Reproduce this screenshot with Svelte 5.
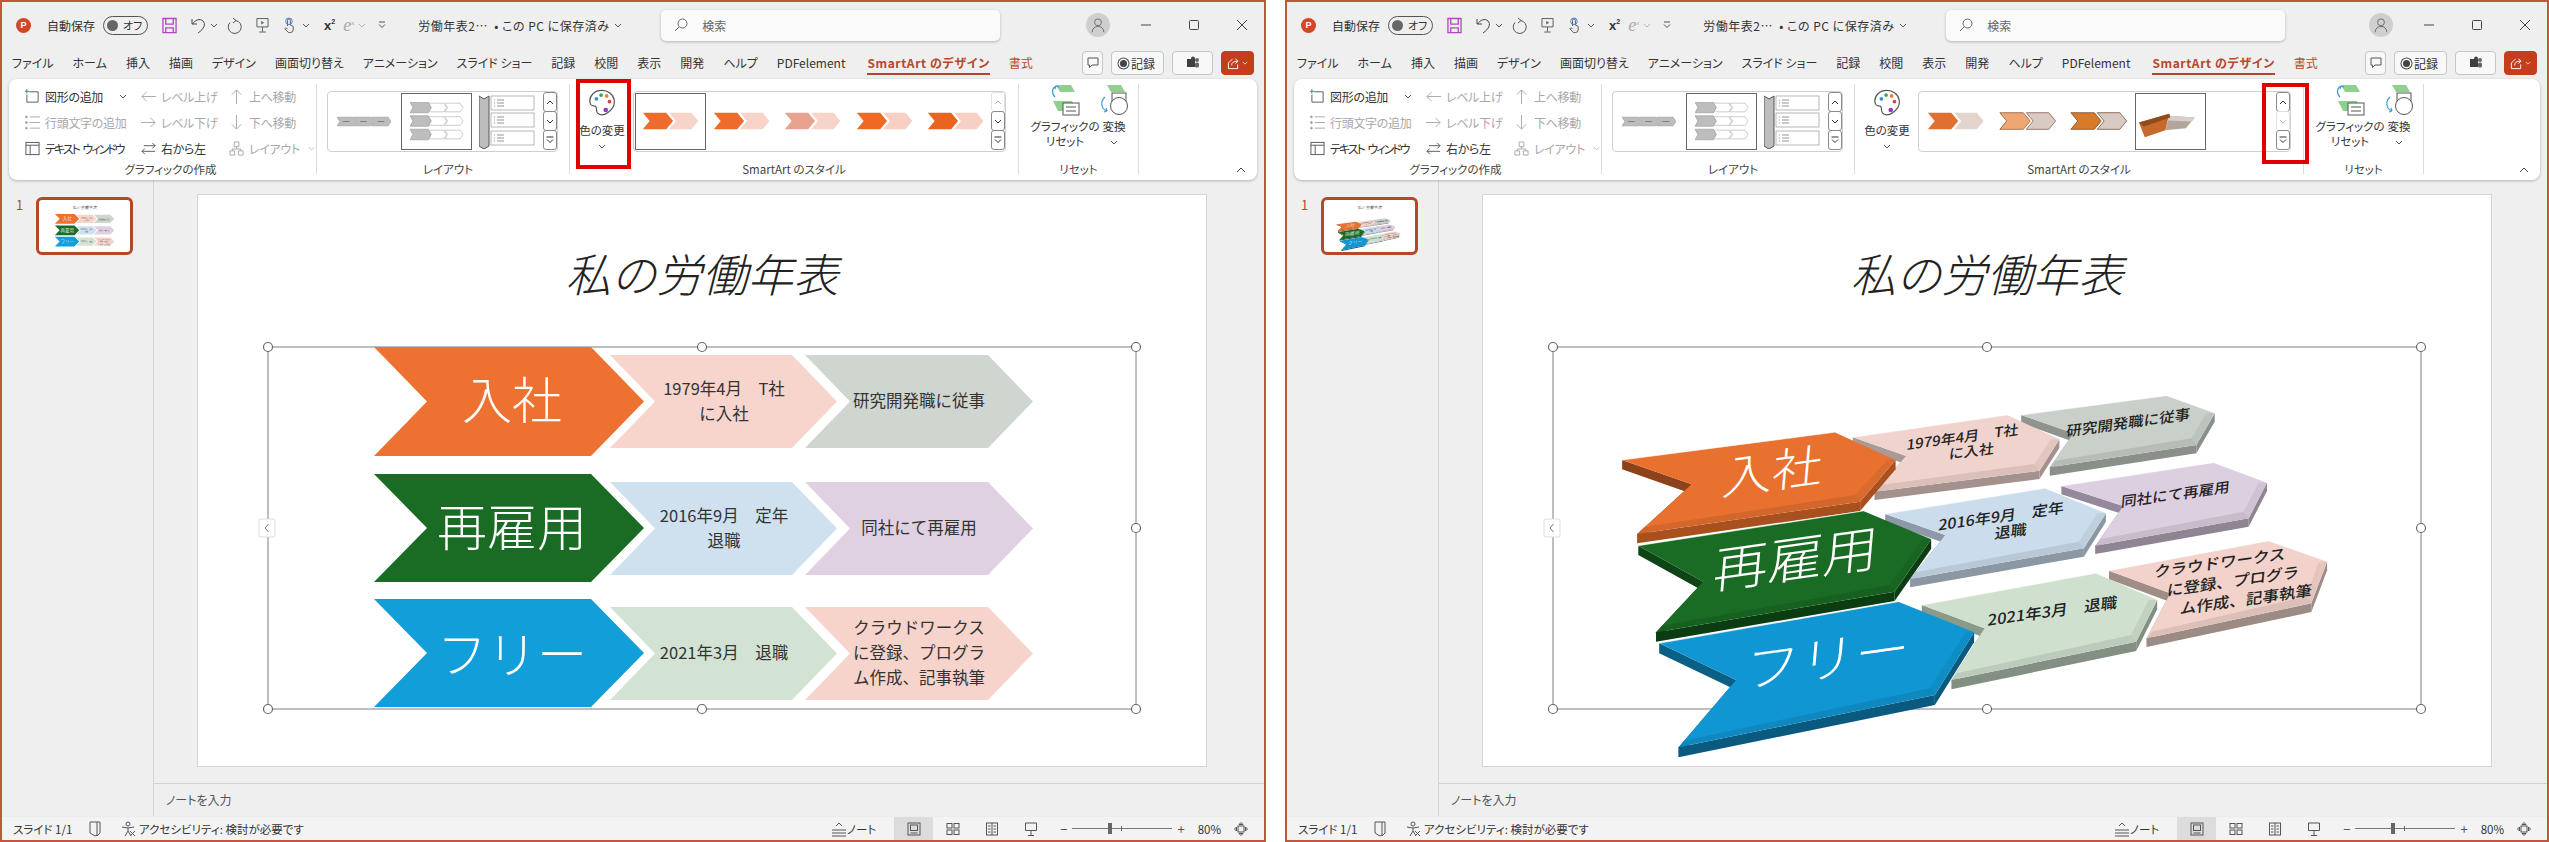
<script>
	const tabs = ['ファイル', 'ホーム', '挿入', '描画', 'デザイン', '画面切り替え', 'アニメーション', 'スライド ショー', '記録', '校閲', '表示', '開発', 'ヘルプ', 'PDFelement']

	const arrow = (x, y, w, h, d) =>
		`${x},${y} ${x + w - d},${y} ${x + w},${y + h / 2} ${x + w - d},${y + h} ${x},${y + h} ${x + d},${y + h / 2}`

	const flatRows = [
		{ y: 347, c: '#ed7231', label: '入社', a: '#f7d5cc', b: '#cfd6cf', at: ['1979年4月　T社', 'に入社'], bt: ['研究開発職に従事'] },
		{ y: 474, c: '#1a6b24', label: '再雇用', a: '#cfe0ef', b: '#e0d1e2', at: ['2016年9月　定年', '退職'], bt: ['同社にて再雇用'] },
		{ y: 599, c: '#119ed9', label: 'フリー', a: '#d3e3d3', b: '#f7d4cb', at: ['2021年3月　退職'], bt: ['クラウドワークス', 'に登録、プログラ', 'ム作成、記事執筆'] }
	]

	// points read off the reference: left tip, shoulder, right tip, lower right, lower left, notch
	const solids = [
		{ top: [[920,105],[1197,47],[1290,100],[1255,195],[975,262],[1020,160]], d: 25, c: '#c9d0c9', s: '#8f948f', f: '#8b8f8a' },
		{ top: [[598,172],[893,105],[993,178],[955,272],[640,335],[700,228]], d: 25, c: '#f0d3cc', s: '#a99a97', f: '#a3918d' },
		{ top: [[157,240],[563,157],[680,240],[612,365],[186,462],[290,313]], d: 28, c: '#e87130', s: '#8c431c', f: '#a9501f' },
		{ top: [[997,318],[1287,248],[1390,308],[1355,415],[1062,497],[1115,378]], d: 25, c: '#dccfe0', s: '#94899a', f: '#8f8492' },
		{ top: [[660,402],[965,325],[1082,400],[1040,505],[708,597],[775,465]], d: 25, c: '#cbdcec', s: '#8d99a8', f: '#8b97a3' },
		{ top: [[188,497],[618,393],[748,478],[678,635],[222,757],[312,605]], d: 28, c: '#1a6b24', s: '#0f4416', f: '#0c3d12' },
		{ top: [[1088,572],[1392,483],[1505,545],[1475,670],[1160,775],[1205,640]], d: 26, c: '#f2d2ca', s: '#a08d88', f: '#9c8a85' },
		{ top: [[730,675],[1062,580],[1180,660],[1140,785],[787,900],[850,745]], d: 28, c: '#cfe0ce', s: '#8c9a8a', f: '#848f83' },
		{ top: [[228,790],[685,665],[830,757],[755,945],[265,1102],[375,900]], d: 30, c: '#1096d2', s: '#0a5f85', f: '#0a5a80' }
	]
	const solidTexts = [
		{ t: '入社', x: 445, y: 265, s: 50, big: true },
		{ t: '再雇用', x: 490, y: 525, s: 55, big: true },
		{ t: 'フリー', x: 550, y: 825, s: 55, big: true },
		{ t: '1979年4月　T社', x: 808, y: 168, s: 15 },
		{ t: 'に入社', x: 825, y: 210, s: 15 },
		{ t: '研究開発職に従事', x: 1125, y: 125, s: 15.5 },
		{ t: '2016年9月　定年', x: 882, y: 405, s: 16 },
		{ t: '退職', x: 900, y: 450, s: 16 },
		{ t: '同社にて再雇用', x: 1215, y: 340, s: 15.5 },
		{ t: '2021年3月　退職', x: 980, y: 690, s: 16.5 },
		{ t: 'クラウドワークス', x: 1300, y: 545, s: 16.5 },
		{ t: 'に登録、プログラ', x: 1325, y: 600, s: 16.5 },
		{ t: 'ム作成、記事執筆', x: 1350, y: 655, s: 16.5 }
	]
	const rx = (x) => x / 1.912 + 255
	const ry = (y) => y / 3 + 380
	const pts = (list) => list.map(([x, y]) => `${rx(x).toFixed(1)},${ry(y).toFixed(1)}`).join(' ')
	const strip = (a, b, d) => pts([a, b, [b[0], b[1] + d], [a[0], a[1] + d]])
	const bevel = (a, b) => pts([a, b, [b[0] - 10, b[1] - 20], [a[0] + 10, a[1] - 20]])
	const edge = (a, b) => pts([a, b, [b[0] - 10, b[1] - 20], [a[0] - 16, a[1]]])

	const windows = [
		{
			cls: 'left', stylesSel: 0, upOff: true, downOff: false,
			styles: [
				{ a: '#ed6b2b', b: '#f8d3ca' }, { a: '#ed6b2b', b: '#f8d3ca' }, { a: '#e8a38f', b: '#f8d3ca' },
				{ a: '#ee6a24', b: '#f7cfc5' }, { a: '#e9641f', b: '#f7cfc5' }
			]
		},
		{
			cls: 'right', stylesSel: 3, upOff: false, downOff: true,
			styles: [
				{ a: '#e0702f', b: '#e3d5ce' }, { a: '#f0a672', b: '#d9cbc4', line: '#7c4a2e' },
				{ a: '#d87a2c', b: '#d9cbc4', line: '#5e3a1e' }, { solid: true }
			]
		}
	]
</script>

{#snippet chev(cls = '')}
	<svg class="chev {cls}" viewBox="0 0 8 5"><polyline points="1,1 4,4 7,1" /></svg>
{/snippet}

{#snippet flatDiagram()}
	{#each flatRows as row, i}
		<polygon points={arrow(374, row.y, 270, 109 - (i ? 1 : 0), 53)} fill={row.c} />
		<polygon points={arrow(610, row.y + 8, 227, 93, 45)} fill={row.a} />
		<polygon points={arrow(805, row.y + 8, 228, 93, 45)} fill={row.b} />
		<text class="big" x="512" y={row.y + 50 + (i === 2 ? 2 : 0)}>{row.label}</text>
		{#each row.at as line, n}
			<text class="small" x="724" y={row.y + 53 + (n - (row.at.length - 1) / 2) * 25}>{line}</text>
		{/each}
		{#each row.bt as line, n}
			<text class="small" x="919" y={row.y + 53 + (n - (row.bt.length - 1) / 2) * 25}>{line}</text>
		{/each}
	{/each}
{/snippet}

{#snippet solidDiagram()}
	{#each solids as s}
		<polygon points={strip(s.top[0], s.top[5], s.d)} fill={s.s} />
		<polygon points={strip(s.top[5], s.top[4], s.d)} fill={s.s} />
		<polygon points={strip(s.top[4], s.top[3], s.d)} fill={s.f} />
		<polygon points={strip(s.top[3], s.top[2], s.d)} fill={s.f} />
		<polygon points={pts(s.top)} fill={s.c} />
		<polygon points={bevel(s.top[4], s.top[3])} fill="#000" opacity="0.09" />
		<polygon points={edge(s.top[2], s.top[3])} fill="#000" opacity="0.06" />
		<polyline points={pts(s.top.slice(0, 2))} fill="none" stroke="#fff" stroke-opacity="0.55" />
	{/each}
	{#each solidTexts as t}
		<text
			class={t.big ? 'big' : 'small tilt'}
			style:font-size="{t.s}px"
			transform="matrix(1 -0.14 -0.08 0.92 {rx(t.x)} {ry(t.y)})"
			x="0" y="0">{t.t}</text>
	{/each}
{/snippet}

{#snippet handles()}
	<rect x="268" y="347" width="868" height="362" fill="none" stroke="#7f7f7f" />
	{#each [268, 702, 1136] as x}
		{#each [347, 528, 709] as y}
			{#if !(x === 702 && y === 528)}
				<circle cx={x} cy={y} r="4.5" fill="#fff" stroke="#666" stroke-width="1.2" />
			{/if}
		{/each}
	{/each}
	<rect x="259" y="519" width="16" height="18" rx="2" fill="#fff" stroke="#ddd" />
	<polyline points="268.5,524 265,528 268.5,532" fill="none" stroke="#777" />
{/snippet}

{#snippet scroller(upOff, downOff)}
	<div class="scroller">
		<div class="sbtn" class:off={upOff}><svg class="chev" viewBox="0 0 8 5"><polyline points="1,4 4,1 7,4" /></svg></div>
		<div class="sbtn" class:off={downOff}>{@render chev()}</div>
		<div class="sbtn">
			<svg class="more" viewBox="0 0 8 8"><line x1="0.5" y1="1" x2="7.5" y2="1" /><polyline points="1,3.5 4,6.5 7,3.5" /></svg>
		</div>
	</div>
{/snippet}

{#snippet win(w)}
	<div class="window {w.cls}">
		<header class="titlebar">
			<span class="app-logo">P</span>
			<span class="autosave">自動保存</span>
			<span class="toggle"><i></i>オフ</span>
			<svg class="qa save" viewBox="0 0 16 17"><path d="M1 1h14v15H1zM4 1v6h8V1M4 16v-5h8v5" /></svg>
			<svg class="qa undo" viewBox="0 0 16 17"><path d="M2 2v5h5M2.5 7C5 3 10 1 13 4s1 8-5 12" /></svg>
			{@render chev('qa-chev')}
			<svg class="qa redo" viewBox="0 0 16 17"><path d="M6 1l3 2.500-3 2.500M8.500 3.500A6.500 6.500 0 1 1 3 5.500" /></svg>
			<svg class="qa present" viewBox="0 0 14 17"><path d="M1 1h12v9H1zM7 10v5M3.500 15.500h7" /><path d="M5.500 3.500l3.500 2-3.500 2z" fill="#3b8f5c" stroke="none" /></svg>
			<svg class="qa touch" viewBox="0 0 16 17"><path d="M7 9V3a1.500 1.500 0 0 1 3 0v5l3 1.500V13a3 3 0 0 1-3 3H8l-4-4 1-1 2 1" /><circle cx="8.500" cy="4" r="3.500" stroke="#3b7dd8" /></svg>
			{@render chev('qa-chev touch-chev')}
			<span class="xsq">x<sup>2</sup></span>
			<span class="ex">e<sup>x</sup></span>
			{@render chev('qa-chev off')}
			<svg class="custom" viewBox="0 0 8 8"><line x1="1" y1="1" x2="7" y2="1" /><polyline points="1,3.500 4,6.500 7,3.500" /></svg>
			<span class="doc">労働年表2⋯ &nbsp;• この PC に保存済み</span>
			{@render chev('doc-chev')}
			<div class="search">
				<svg viewBox="0 0 14 14"><circle cx="8.500" cy="5.500" r="4.500" /><line x1="5" y1="9" x2="1" y2="13" /></svg>
				<span>検索</span>
			</div>
			<div class="avatar">
				<svg viewBox="0 0 20 20"><circle cx="10" cy="7" r="3.800" /><path d="M3.500 18c0-4 3-6.500 6.500-6.500s6.500 2.500 6.500 6.500" /></svg>
			</div>
			<div class="winctl">
				<svg viewBox="0 0 12 12"><line x1="1" y1="6" x2="11" y2="6" /></svg>
				<svg viewBox="0 0 12 12"><rect x="1.500" y="1.500" width="9" height="9" rx="1" /></svg>
				<svg viewBox="0 0 12 12"><path d="M1 1l10 10M11 1L1 11" /></svg>
			</div>
		</header>

		<nav class="tabs">
			{#each tabs as tab}<span>{tab}</span>{/each}
			<span class="design">SmartArt のデザイン</span>
			<span class="format">書式</span>
			<div class="tab-btns">
				<button class="comment"><svg viewBox="0 0 12 12"><path d="M1 1h10v7H5L2.500 10.500V8H1z" /></svg></button>
				<button class="rec"><i></i>記録</button>
				<button class="teams"><svg viewBox="0 0 14 14"><rect x="1" y="3" width="8" height="8" fill="#3f3f3f" /><circle cx="11" cy="4" r="2" fill="#666" /><rect x="9" y="6.500" width="4" height="5" rx="1.500" fill="#666" /><circle cx="7" cy="2.500" r="2" fill="#444" /></svg></button>
				<button class="share"><svg viewBox="0 0 14 14"><path d="M1.500 6.500v6h10V8M1.500 6.500L6 2M5 9c0-3 2-4.500 6-4.500M9 2l3 2.500L9 7" /></svg>{@render chev()}</button>
			</div>
		</nav>

		<section class="ribbon">
			<div class="group g-create">
				<div class="cmds">
					<div class="cmd c1">
						<svg viewBox="0 0 16 16"><path d="M5 3h9v11H2V6" /><path d="M2 0v5M0 2.500h5" stroke="#3b8f5c" /></svg>
						<span>図形の追加</span>{@render chev('cmd-chev')}
					</div>
					<div class="cmd c2 off">
						<svg viewBox="0 0 16 12"><path d="M1 6h15M1 6l5-5M1 6l5 5" /></svg><span>レベル上げ</span>
					</div>
					<div class="cmd c3 off">
						<svg viewBox="0 0 12 16"><path d="M6 1v15M1 6l5-5 5 5" /></svg><span>上へ移動</span>
					</div>
					<div class="cmd c1 off">
						<svg viewBox="0 0 16 16"><path d="M5 2h11M5 8h11M5 14h11" /><circle cx="1.500" cy="2" r="1" fill="#999" /><circle cx="1.500" cy="8" r="1" fill="#999" /><circle cx="1.500" cy="14" r="1" fill="#999" /></svg>
						<span>行頭文字の追加</span>
					</div>
					<div class="cmd c2 off">
						<svg viewBox="0 0 16 12"><path d="M0 6h15M15 6l-5-5M15 6l-5 5" /></svg><span>レベル下げ</span>
					</div>
					<div class="cmd c3 off">
						<svg viewBox="0 0 12 16"><path d="M6 0v15M1 10l5 5 5-5" /></svg><span>下へ移動</span>
					</div>
					<div class="cmd c1">
						<svg viewBox="0 0 16 16"><rect x="1" y="1.500" width="14" height="13" /><path d="M1 4.500h14M5.500 4.500v10" /></svg>
						<span class="tight">テキスト ウィンドウ</span>
					</div>
					<div class="cmd c2">
						<svg viewBox="0 0 16 16"><path d="M1 11h14M1 11l3 3M1 11l3-3M15 5H3M15 5l-3-3M15 5l-3 3" /></svg><span>右から左</span>
					</div>
					<div class="cmd c3 off">
						<svg viewBox="0 0 16 16"><path d="M5.500 1h5v5h-5zM1 10.500h5v4.500H1zM10 10.500h5v4.500h-5zM8 6v2.500M3.500 10.500V8.500h9v2" /></svg>
						<span>レイアウト</span>{@render chev('cmd-chev off')}
					</div>
				</div>
				<div class="label">グラフィックの作成</div>
			</div>

			<div class="group g-layout">
				<div class="gallery layouts">
					<svg class="l-item first" viewBox="0 0 56 12">
						{#each [0, 18, 36] as x}
							<polygon points={arrow(x, 1, 20, 9, 3)} fill="#bdbdbd" stroke="#888" stroke-width="0.5" />
							<line x1={x + 6} y1="5.500" x2={x + 13} y2="5.500" stroke="#666" stroke-width="0.7" />
						{/each}
					</svg>
					<div class="l-sel">
						<svg viewBox="0 0 56 40">
							{#each [0, 14, 28] as y}
								<polygon points={arrow(36, y + 1, 19, 9, 3)} fill="#fff" stroke="#999" stroke-width="0.5" />
								<polygon points={arrow(19, y + 1, 19, 9, 3)} fill="#fff" stroke="#999" stroke-width="0.5" />
								<polygon points={arrow(0, y, 22, 11, 3)} fill="#bdbdbd" stroke="#888" stroke-width="0.5" />
							{/each}
						</svg>
					</div>
					<svg class="l-item third" viewBox="0 0 56 54">
						<path d="M0 1l5 3 5-3v50l-5 3-5-3z" fill="#bdbdbd" />
						{#each [1, 18, 36] as y}
							<rect x="12" y={y} width="43" height="14" fill="#fff" stroke="#999" stroke-width="0.7" />
							<path d="M15 {y + 4}h1M18 {y + 4}h7M15 {y + 7}h1M18 {y + 7}h7M15 {y + 10}h1M18 {y + 10}h7" stroke="#666" stroke-width="0.7" />
						{/each}
					</svg>
					{@render scroller(false, false)}
				</div>
				<div class="label">レイアウト</div>
			</div>

			<div class="group g-style">
				<div class="style-row">
					<div class="big-cmd color-cmd">
						<svg class="palette" viewBox="0 0 30 30">
							<path d="M15 2C7 2 1.500 7.500 2 14c.5 6 4 4 6 5s0 4 2 7 7 3 11 0c5-3.500 8-9 7-14C27 6 21 2 15 2z" fill="#fff" stroke="#555" stroke-width="1.300" />
							<circle cx="9" cy="11" r="2" fill="#2f8fd0" stroke="none" /><circle cx="14" cy="7" r="2" fill="#3aa655" stroke="none" />
							<circle cx="20" cy="8" r="2" fill="#e9812e" stroke="none" /><circle cx="23" cy="14" r="2" fill="#d9423a" stroke="none" />
							<circle cx="19" cy="23" r="2.500" fill="#8a3fb0" stroke="none" />
						</svg>
						<span>色の変更</span>
						{@render chev()}
					</div>
					<div class="gallery styles">
						{#each w.styles as st, i}
							<div class="s-item" class:sel={i === w.stylesSel}>
								<svg viewBox="0 0 71 56">
									{#if st.solid}
										<polygon points="34,22 60,24 51,35 30,37" fill="#b5a49c" stroke="none" />
										<polygon points="34,22 60,24 57,28 32,27" fill="#d7cfcb" stroke="none" />
										<polygon points="3,29 34,20 30,37 9,44" fill="#c8682a" stroke="none" />
										<polygon points="3,29 34,20 35,24 8,33" fill="#8f4a1e" stroke="none" />
									{:else}
										<polygon points={arrow(34, 19, 30, 17, 7)} fill={st.b} stroke={st.line ?? 'none'} stroke-width="0.7" />
										<polygon points={arrow(7, 19, 31, 17, 7)} fill={st.a} stroke={st.line ?? 'none'} stroke-width="0.7" />
									{/if}
								</svg>
							</div>
						{/each}
						{@render scroller(w.upOff, w.downOff)}
					</div>
				</div>
				<div class="label">SmartArt のスタイル</div>
			</div>

			<div class="group g-reset">
				<div class="reset-row">
					<div class="big-cmd reset-cmd">
						<svg class="r-icon" viewBox="0 0 30 31">
							<polygon points="6,0 21,0 25,7 10,7" fill="#8ed08e" />
							<polygon points="3,16 22,16 27,26 8,26" fill="#8ed08e" />
							<path d="M6 1C2 3 1 8 5 12M6 1l3 1M6 1L5 4" fill="none" stroke="#3a9ad9" stroke-width="1.200" />
							<rect x="13" y="18" width="16" height="12" fill="#fff" stroke="#555" />
							<path d="M16 22h10M16 26h10" stroke="#555" />
						</svg>
						<span>グラフィックの<br />リセット</span>
					</div>
					<div class="big-cmd convert-cmd">
						<svg class="r-icon" viewBox="0 0 30 31">
							<polygon points="8,0 22,0 26,7 12,7" fill="#8ed08e" />
							<rect x="13" y="8" width="14" height="9" fill="#fff" stroke="#555" />
							<circle cx="20" cy="21" r="8.500" fill="#fff" stroke="#555" />
							<path d="M6 12C1 16 2 24 8 26M8 26l-3 1M8 26L7 23" fill="none" stroke="#3a9ad9" stroke-width="1.200" />
						</svg>
						<span>変換</span>
						{@render chev()}
					</div>
				</div>
				<div class="label">リセット</div>
			</div>

			<svg class="collapse" viewBox="0 0 10 6"><polyline points="1,5 5,1 9,5" /></svg>
		</section>

		<div class="editor">
			<aside class="thumbs">
				<span class="num">1</span>
				<div class="thumb">
					<svg viewBox="198 195 1008 571">
						<text class="title" x="702" y="272">私の労働年表</text>
						{#if w.cls === 'left'}{@render flatDiagram()}{:else}{@render solidDiagram()}{/if}
					</svg>
				</div>
			</aside>
			<main class="stage">
				<div class="slide">
					<svg viewBox="198 195 1008 571">
						<text class="title" x="702" y="272">私の労働年表</text>
						{@render handles()}
						{#if w.cls === 'left'}{@render flatDiagram()}{:else}{@render solidDiagram()}{/if}
					</svg>
				</div>
				<div class="notes">ノートを入力</div>
			</main>
		</div>

		<footer class="status">
			<span class="count">スライド 1/1</span>
			<svg class="st-book" viewBox="0 0 14 16"><path d="M2 1h10v11l-3 3V1M2 1v11l5 3 2-1" /></svg>
			<svg class="st-a11y" viewBox="0 0 16 16"><circle cx="8" cy="3" r="2" /><path d="M2 6l6 1 6-1M8 7v3l-3 5M8 10l3 5M10 10l5 5M15 10l-5 5" /></svg>
			<span>アクセシビリティ: 検討が必要です</span>
			<div class="st-right">
				<svg class="st-note" viewBox="0 0 16 16"><path d="M1 9h14M1 12h14M1 15h14M5 5l3-3 3 3" /></svg>
				<span class="note-txt">ノート</span>
				<div class="view active"><svg viewBox="0 0 14 14"><rect x="1" y="1" width="12" height="12" /><rect x="3.500" y="3" width="7" height="5.500" /><path d="M3.500 11h7" /></svg></div>
				<div class="view"><svg viewBox="0 0 14 14"><rect x="1" y="1.500" width="5" height="4.500" /><rect x="8" y="1.500" width="5" height="4.500" /><rect x="1" y="8" width="5" height="4.500" /><rect x="8" y="8" width="5" height="4.500" /></svg></div>
				<div class="view"><svg viewBox="0 0 14 14"><rect x="1.500" y="1" width="11" height="12" /><path d="M7 1v12M3 4h2.500M3 7h2.500M3 10h2.500M8.500 4H11M8.500 7H11M8.500 10H11" /></svg></div>
				<div class="view"><svg viewBox="0 0 14 14"><path d="M1.500 1h11v7.500h-11zM7 8.500V13M4 13.500h6" /></svg></div>
				<span class="zm minus">−</span>
				<div class="slider"><i class="mid"></i><i class="thumb-z"></i></div>
				<span class="zm plus">+</span>
				<span class="pct">80%</span>
				<svg class="fit" viewBox="0 0 14 14"><rect x="4" y="4" width="6" height="6" /><path d="M7 0.500l-2 2h4zM7 13.500l-2-2h4zM0.500 7l2-2v4zM13.500 7l-2-2v4z" /></svg>
			</div>
		</footer>

		<div class="red-mark"></div>
	</div>
{/snippet}

<div class="page">
	{#each windows as w}
		{@render win(w)}
	{/each}
</div>

<style>
	:global(body) {
		margin: 0;
		background: #fff;
		overflow: hidden;
	}

	.page {
		display: flex;
		gap: 19px;
		width: 2549px;
		height: 842px;
		overflow: hidden;
		font: 12px "Noto Sans CJK JP", "Noto Sans", sans-serif;
		font-feature-settings: "palt";
		color: #333;
	}

	svg {
		display: block;
		fill: none;
		stroke: #555;
		stroke-width: 1;
	}

	.window {
		position: relative;
		display: flex;
		flex-direction: column;
		box-sizing: border-box;
		height: 842px;
		flex: none;
		background: #efefef;
		border: 2px solid #c0563a;
	}
	.window.left { width: 1266px; }
	.window.right { width: 1264px; }

	.chev {
		width: 8px;
		height: 5px;
		stroke: #555;
		flex: none;
	}
	.chev.off { stroke: #b5b5b5; }

	/* title bar */
	.titlebar {
		display: flex;
		align-items: center;
		height: 46px;
		flex: none;
	}
	.app-logo {
		width: 15px;
		height: 15px;
		margin-left: 14px;
		border-radius: 50%;
		background: #d24726;
		color: #fff;
		font: bold 9px/15px "Liberation Sans", sans-serif;
		text-align: center;
	}
	.autosave { margin-left: 16px; }
	.toggle {
		display: flex;
		align-items: center;
		box-sizing: border-box;
		width: 45px;
		height: 19px;
		margin-left: 8px;
		padding: 0 3px;
		gap: 5px;
		border: 1px solid #555;
		border-radius: 10px;
		font-size: 11px;
		white-space: nowrap;
	}
	.toggle i {
		width: 11px;
		height: 11px;
		border-radius: 50%;
		background: #666;
		flex: none;
	}
	.qa { height: 17px; }
	.save { width: 15px; margin-left: 14px; stroke: #b146c2; stroke-width: 1.4; }
	.undo { width: 16px; margin-left: 13px; stroke: #444; }
	:global(.qa-chev) { margin-left: 4px; }
	.redo { width: 16px; margin-left: 9px; }
	.present { width: 13px; margin-left: 13px; }
	.touch { width: 15px; margin-left: 12px; }
	:global(.touch-chev) { margin-left: 6px; }
	.xsq {
		margin-left: 14px;
		font: bold 13px "Liberation Sans", sans-serif;
	}
	.ex {
		margin-left: 8px;
		font: italic 18px "Liberation Serif", serif;
		color: #aaa;
	}
	sup { font-size: 7px; vertical-align: 6px; line-height: 0; }
	.custom { width: 8px; height: 8px; margin-left: 12px; stroke: #555; }
	.doc {
		width: 191px;
		margin-left: 32px;
		white-space: nowrap;
		letter-spacing: 0.5px;
	}
	:global(.doc-chev) { margin-left: 5px; }
	.titlebar > :global(.doc-chev) { margin-right: 39px; }
	.search {
		display: flex;
		align-items: center;
		gap: 14px;
		box-sizing: border-box;
		width: 339px;
		height: 31px;
		padding-left: 13px;
		background: #fafafa;
		border-radius: 5px;
		box-shadow: 0 1px 3px rgba(0, 0, 0, 0.25);
		color: #666;
	}
	.search svg { width: 14px; height: 14px; stroke: #666; }
	.avatar {
		display: flex;
		align-items: center;
		justify-content: center;
		width: 24px;
		height: 24px;
		margin-left: auto;
		background: #cfcfcf;
		border-radius: 50%;
	}
	.avatar svg { width: 18px; height: 18px; stroke: #666; }
	.winctl {
		display: flex;
		gap: 36px;
		margin: 0 16px 0 30px;
	}
	.winctl svg { width: 12px; height: 12px; stroke: #444; }

	/* tabs */
	.tabs {
		display: flex;
		align-items: center;
		gap: 19px;
		height: 30px;
		padding: 0 10px 0 10px;
		flex: none;
		white-space: nowrap;
	}
	.tabs > span { line-height: 20px; }
	.design {
		margin-left: 3px;
		font-weight: bold;
		color: #b7472a;
		letter-spacing: 0.6px;
		box-shadow: 0 2px 0 #b7472a;
	}
	.format { color: #b7472a; }
	.tab-btns {
		display: flex;
		gap: 8px;
		margin-left: auto;
		height: 24px;
	}
	button {
		display: flex;
		align-items: center;
		justify-content: center;
		box-sizing: border-box;
		height: 24px;
		padding: 0;
		background: #f8f8f8;
		border: 1px solid #c6c6c6;
		border-radius: 4px;
		font: inherit;
		color: #333;
	}
	.comment { width: 21px; }
	.comment svg { width: 12px; height: 12px; }
	.rec { width: 53px; gap: 4px; }
	.rec i {
		width: 7px;
		height: 7px;
		border-radius: 50%;
		background: #444;
		box-shadow: 0 0 0 1.5px #f8f8f8, 0 0 0 2.5px #444;
	}
	.teams { width: 41px; }
	.teams svg { width: 14px; height: 14px; stroke: none; }
	.share {
		width: 33px;
		gap: 2px;
		background: #c43e1c;
		border-color: #c43e1c;
	}
	.share svg { width: 13px; height: 13px; stroke: #fff; }
	.share :global(.chev) { stroke: #fff; width: 6px; height: 4px; }

	/* ribbon */
	.ribbon {
		position: relative;
		display: flex;
		height: 101px;
		margin: 1px 7px 0;
		background: #fff;
		border-radius: 8px;
		box-shadow: 0 1px 3px rgba(0, 0, 0, 0.25);
		flex: none;
	}
	.group {
		display: flex;
		flex-direction: column;
		box-sizing: border-box;
		height: 90px;
		margin-top: 5px;
		border-right: 1px solid #dcdcdc;
	}
	.label {
		margin-top: auto;
		margin-bottom: -3px;
		text-align: center;
		font-size: 11.5px;
		color: #444;
		line-height: 16px;
	}
	.g-create { width: 308px; padding-left: 16px; }
	.cmds {
		display: grid;
		grid-template-columns: 116px 88px 90px;
		grid-auto-rows: 26px;
		margin-top: -1px;
	}
	.cmd {
		display: flex;
		align-items: center;
		gap: 5px;
		white-space: nowrap;
		letter-spacing: -0.3px;
	}
	.cmd .tight { letter-spacing: -2px; word-spacing: 3px; }
	.cmd svg { width: 15px; height: 15px; flex: none; }
	.cmd.off { color: #a8a8a8; }
	.cmd.off svg { stroke: #a8a8a8; }
	.cmd :global(.cmd-chev) { width: 8px; height: 5px; margin-left: 11px; }
	.cmd.off :global(.cmd-chev) { width: 7px; margin-left: 3px; stroke: #b5b5b5; }

	.g-layout { width: 253px; padding-left: 10px; }
	.gallery {
		display: flex;
		align-items: center;
		box-sizing: border-box;
		background: #fff;
		border: 1px solid #cfcfcf;
		border-radius: 4px;
		height: 61px;
		margin-top: 7px;
	}
	.layouts { width: 231px; padding-left: 9px; position: relative; }
	.l-item.first { width: 54px; height: 12px; }
	.l-sel {
		display: flex;
		align-items: center;
		justify-content: center;
		box-sizing: border-box;
		width: 71px;
		height: 57px;
		margin-left: 10px;
		border: 1.5px solid #666;
	}
	.l-sel svg { width: 54px; height: 39px; }
	.l-item.third { width: 56px; height: 54px; margin-left: 7px; }
	.scroller {
		display: flex;
		flex-direction: column;
		margin-left: auto;
		width: 14px;
		height: 59px;
		flex: none;
	}
	.sbtn {
		display: flex;
		align-items: center;
		justify-content: center;
		height: 20px;
		box-sizing: border-box;
		border: 1px solid #8a8a8a;
		border-radius: 3px;
		background: #fff;
	}
	.sbtn + .sbtn { margin-top: -1px; }
	.sbtn :global(.chev) { stroke: #333; }
	.sbtn.off { border-color: #e2e2e2; }
	.sbtn.off :global(.chev) { stroke: #bbb; }
	.more { width: 8px; height: 8px; stroke: #333; }

	.g-style { width: 449px; }
	.style-row { display: flex; }
	.big-cmd {
		display: flex;
		flex-direction: column;
		align-items: center;
		text-align: center;
		line-height: 15px;
		white-space: nowrap;
		font-size: 11.5px;
	}
	.color-cmd { width: 54px; margin-left: 5px; padding-top: 4px; }
	.palette { width: 28px; height: 29px; margin-bottom: 6px; }
	.color-cmd :global(.chev) { margin-top: 6px; }
	.styles { width: 373px; margin-left: 4px; padding-left: 1px; }
	.s-item {
		box-sizing: border-box;
		width: 71.500px;
		height: 57px;
		border: 1.500px solid transparent;
	}
	.s-item.sel { border-color: #666; }
	.s-item svg { width: 100%; height: 100%; stroke: none; }

	.g-reset { width: 120px; }
	.reset-row { display: flex; padding-top: 1px; }
	.r-icon { width: 30px; height: 31px; margin-bottom: 3px; stroke: none; }
	.reset-cmd { width: 60px; margin-left: 16px; }
	.convert-cmd { width: 30px; margin-left: 4px; }
	.convert-cmd :global(.chev) { margin-top: 6px; }
	.collapse {
		position: absolute;
		right: 11px;
		bottom: 7px;
		width: 10px;
		height: 6px;
		stroke: #444;
	}

	/* slide area */
	.editor {
		display: flex;
		flex: 1;
		min-height: 0;
	}
	.thumbs {
		display: flex;
		align-items: flex-start;
		box-sizing: border-box;
		width: 152px;
		padding: 17px 0 0 14px;
		border-right: 1px solid #d5d5d5;
		flex: none;
	}
	.num {
		width: 20px;
		font-size: 13px;
		line-height: 16px;
		color: #b7472a;
	}
	.thumb {
		box-sizing: border-box;
		width: 97px;
		height: 58px;
		background: #fff;
		border: 3px solid #b7472a;
		border-radius: 6px;
		overflow: hidden;
	}
	.thumb svg { width: 100%; height: 100%; stroke: none; }
	.stage {
		display: flex;
		flex-direction: column;
		flex: 1;
		min-width: 0;
	}
	.slide {
		width: 1008px;
		height: 571px;
		margin: 15px 0 0 44px;
		background: #fff;
		box-shadow: 0 0 0 1px #d4d4d4;
		flex: none;
	}
	.slide svg { width: 100%; height: 100%; stroke: none; }
	.notes {
		margin-top: 17px;
		padding: 7px 12px;
		border-top: 1px solid #d0d0d0;
		color: #555;
		flex: 1;
	}
	text {
		font-family: "Noto Sans CJK JP", sans-serif;
		text-anchor: middle;
		dominant-baseline: central;
		stroke: none;
	}
	.title {
		font-size: 45.500px;
		font-style: italic;
		font-weight: 300;
		fill: #222;
		font-feature-settings: normal;
	}
	.big {
		font-size: 50px;
		font-weight: 300;
		fill: #fff;
		font-feature-settings: normal;
	}
	.small {
		font-size: 16.500px;
		fill: #333;
		font-feature-settings: normal;
	}
	text.tilt { fill: #222; font-weight: 500; }

	/* status bar */
	.status {
		display: flex;
		align-items: center;
		height: 23px;
		padding-left: 11px;
		background: #f3f3f3;
		flex: none;
		font-size: 11.5px;
		white-space: nowrap;
		border-top: 1px solid #ececec;
	}
	.count { width: 75px; }
	.st-book { width: 14px; height: 16px; }
	.st-a11y { width: 16px; height: 16px; margin: 0 3px 0 18px; }
	.st-right {
		display: flex;
		align-items: center;
		margin-left: auto;
		height: 100%;
		padding-right: 16px;
	}
	.st-note { width: 16px; height: 16px; }
	.note-txt { margin-right: 18px; }
	.view {
		display: flex;
		align-items: center;
		justify-content: center;
		width: 39px;
		height: 100%;
	}
	.view.active { background: #dcdcdc; }
	.view svg { width: 14px; height: 14px; }
	.zm { font-size: 13px; color: #555; }
	.minus { margin-left: 10px; }
	.slider {
		position: relative;
		width: 100px;
		height: 1px;
		margin: 0 5px;
		background: #777;
	}
	.slider i { position: absolute; background: #666; }
	.thumb-z { left: 36px; top: -5px; width: 4px; height: 11px; }
	.mid { left: 49px; top: -2px; width: 1px; height: 5px; }
	.pct { margin-left: 13px; }
	.fit { width: 14px; height: 14px; margin-left: 13px; }

	/* red callout */
	.red-mark {
		position: absolute;
		box-sizing: border-box;
		border: 4px solid #e00000;
		pointer-events: none;
	}
	.left .red-mark { left: 574px; top: 77px; width: 55px; height: 90px; }
	.right .red-mark { left: 975px; top: 81px; width: 47px; height: 81px; }
</style>
